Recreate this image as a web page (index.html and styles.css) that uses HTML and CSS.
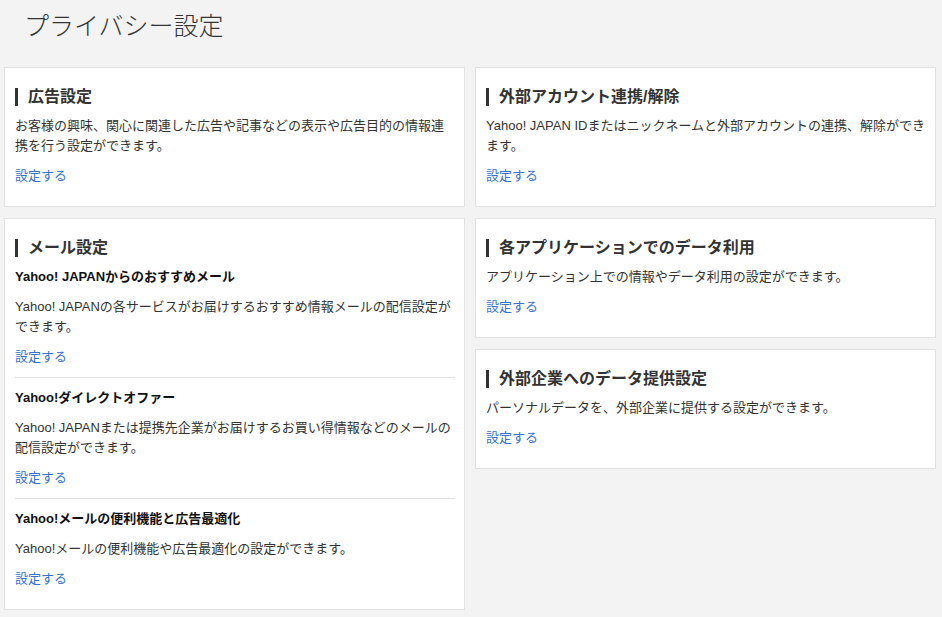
FILE: index.html
```html
<!DOCTYPE html>
<html lang="ja">

<head>
    <meta charset="UTF-8">
    <meta name="viewport" content="width=device-width, initial-scale=1.0">
    <title>プライバシー設定</title>
    <link rel="stylesheet" href="styles.css">
</head>

<body>
    <h1 class="page_title">プライバシー設定</h1>

    <div class="columns">
        <!-- 左列 -->
        <div class="column">
            <div class="card">
                <h2 class="card_title">広告設定</h2>
                <p class="desc">お客様の興味、関心に関連した広告や記事などの表示や広告目的の情報連携を行う設定ができます。</p>
                <a class="link" href="#">設定する</a>
            </div>

            <div class="card">
                <h2 class="card_title">メール設定</h2>
                <div class="item">
                    <h3 class="item_title">Yahoo! JAPANからのおすすめメール</h3>
                    <p class="desc">Yahoo! JAPANの各サービスがお届けするおすすめ情報メールの配信設定ができます。</p>
                    <a class="link" href="#">設定する</a>
                </div>
                <div class="item">
                    <h3 class="item_title">Yahoo!ダイレクトオファー</h3>
                    <p class="desc">Yahoo! JAPANまたは提携先企業がお届けするお買い得情報などのメールの配信設定ができます。</p>
                    <a class="link" href="#">設定する</a>
                </div>
                <div class="item">
                    <h3 class="item_title">Yahoo!メールの便利機能と広告最適化</h3>
                    <p class="desc">Yahoo!メールの便利機能や広告最適化の設定ができます。</p>
                    <a class="link" href="#">設定する</a>
                </div>
            </div>
        </div>

        <!-- 右列 -->
        <div class="column">
            <div class="card">
                <h2 class="card_title">外部アカウント連携/解除</h2>
                <p class="desc">Yahoo! JAPAN IDまたはニックネームと外部アカウントの連携、解除ができます。</p>
                <a class="link" href="#">設定する</a>
            </div>

            <div class="card">
                <h2 class="card_title">各アプリケーションでのデータ利用</h2>
                <p class="desc">アプリケーション上での情報やデータ利用の設定ができます。</p>
                <a class="link" href="#">設定する</a>
            </div>

            <div class="card">
                <h2 class="card_title">外部企業へのデータ提供設定</h2>
                <p class="desc">パーソナルデータを、外部企業に提供する設定ができます。</p>
                <a class="link" href="#">設定する</a>
            </div>
        </div>
    </div>
</body>

</html>
```

FILE: styles.css
```css
* {
    margin: 0;
    padding: 0;
    box-sizing: border-box;
}

body {
    background-color: #f3f3f3;
    color: #333;
    font-family: "Liberation Sans", "Noto Sans CJK JP", sans-serif;
    font-size: 13px;
}

.page_title {
    padding-left: 24px;
    height: 50px;
    line-height: 52px;
    margin-bottom: 17px;
    font-size: 25px;
    font-weight: 300;
    color: #333;
}

.columns {
    display: grid;
    grid-template-columns: 461px 461px;
    gap: 10px;
    padding: 0 4px;
    align-items: start;
}

.column {
    display: flex;
    flex-direction: column;
    gap: 11px;
}

.card {
    background-color: #fff;
    border: 1px solid #e2e2e2;
    padding: 20px 9px 20px 10px;
}

.card_title {
    border-left: 3px solid #333;
    padding-left: 10px;
    font-size: 16px;
    line-height: 18px;
    font-weight: bold;
    margin-bottom: 10px;
}

.item {
    padding-bottom: 10px;
    border-bottom: 1px solid #e2e2e2;
    margin-bottom: 10px;
}

.item:last-child {
    padding-bottom: 0;
    border-bottom: none;
    margin-bottom: 0;
}

.item_title {
    font-size: 13px;
    line-height: 20px;
    font-weight: bold;
    color: #111;
    margin-bottom: 10px;
}

.desc {
    line-height: 20px;
    margin-bottom: 10px;
}

.link {
    display: block;
    line-height: 20px;
    color: #3672d3;
    text-decoration: none;
}
```
